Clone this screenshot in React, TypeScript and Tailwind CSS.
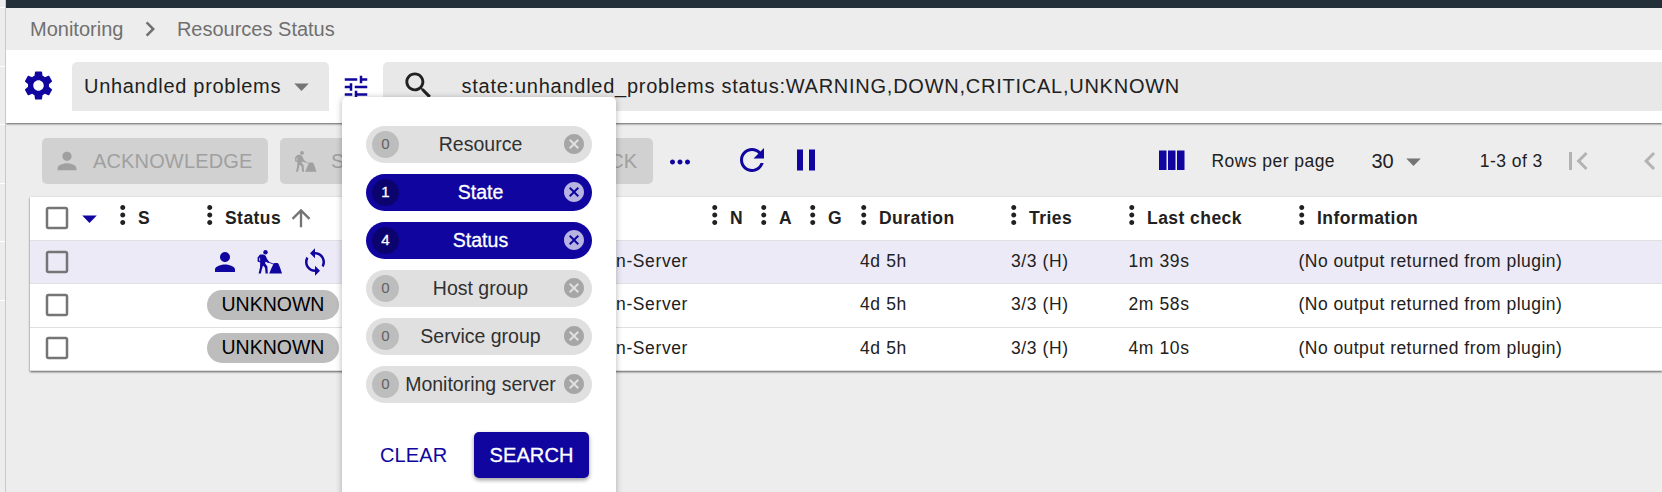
import React from "react";

const paths = {
  chevronRight: "M10 6 8.59 7.41 13.17 12l-4.58 4.59L10 18l6-6z",
  settings:
    "M19.14 12.94c.04-.3.06-.61.06-.94 0-.32-.02-.64-.07-.94l2.03-1.58c.18-.14.23-.41.12-.61l-1.92-3.32c-.12-.22-.37-.29-.59-.22l-2.39.96c-.5-.38-1.03-.7-1.62-.94l-.36-2.54c-.04-.24-.24-.41-.48-.41h-3.84c-.24 0-.43.17-.47.41l-.36 2.54c-.59.24-1.13.57-1.62.94l-2.39-.96c-.22-.08-.47 0-.59.22L2.74 8.87c-.12.21-.08.47.12.61l2.03 1.58c-.05.3-.09.63-.09.94s.02.64.07.94l-2.03 1.58c-.18.14-.23.41-.12.61l1.92 3.32c.12.22.37.29.59.22l2.39-.96c.5.38 1.03.7 1.62.94l.36 2.54c.05.24.24.41.48.41h3.84c.24 0 .44-.17.47-.41l.36-2.54c.59-.24 1.13-.56 1.62-.94l2.39.96c.22.08.47 0 .59-.22l1.92-3.32c.12-.22.07-.47-.12-.61l-2.01-1.58zM12 15.6c-1.98 0-3.6-1.62-3.6-3.6s1.62-3.6 3.6-3.6 3.6 1.62 3.6 3.6-1.62 3.6-3.6 3.6z",
  caret: "M7 10l5 5 5-5z",
  tune: "M3 17v2h6v-2H3zM3 5v2h10V5H3zm10 16v-2h8v-2h-8v-2h-2v6h2zM7 9v2H3v2h4v2h2V9H7zm14 4v-2H11v2h10zm-6-4h2V7h4V5h-4V3h-2v6z",
  search:
    "M15.5 14h-.79l-.28-.27C15.41 12.59 16 11.11 16 9.5 16 5.91 13.09 3 9.5 3S3 5.91 3 9.5 5.91 16 9.5 16c1.61 0 3.09-.59 4.23-1.57l.27.28v.79l5 4.99L20.49 19l-4.99-5zm-6 0C7.01 14 5 11.99 5 9.5S7.01 5 9.5 5 14 7.01 14 9.5 11.99 14 9.5 14z",
  person: "M12 12c2.21 0 4-1.79 4-4s-1.79-4-4-4-4 1.79-4 4 1.79 4 4 4zm0 2c-2.67 0-8 1.34-8 4v2h16v-2c0-2.66-5.33-4-8-4z",
  moreHoriz:
    "M6 10c-1.1 0-2 .9-2 2s.9 2 2 2 2-.9 2-2-.9-2-2-2zm12 0c-1.1 0-2 .9-2 2s.9 2 2 2 2-.9 2-2-.9-2-2-2zm-6 0c-1.1 0-2 .9-2 2s.9 2 2 2 2-.9 2-2-.9-2-2-2z",
  moreVert:
    "M12 8c1.1 0 2-.9 2-2s-.9-2-2-2-2 .9-2 2 .9 2 2 2zm0 2c-1.1 0-2 .9-2 2s.9 2 2 2 2-.9 2-2-.9-2-2-2zm0 6c-1.1 0-2 .9-2 2s.9 2 2 2 2-.9 2-2-.9-2-2-2z",
  refresh:
    "M17.65 6.35C16.2 4.9 14.21 4 12 4c-4.42 0-7.99 3.58-7.99 8s3.57 8 7.99 8c3.73 0 6.84-2.55 7.73-6h-2.08c-.82 2.33-3.04 4-5.65 4-3.31 0-6-2.69-6-6s2.69-6 6-6c1.66 0 3.14.69 4.22 1.78L13 11h7V4l-2.35 2.35z",
  pause: "M6 19h4V5H6v14zm8-14v14h4V5h-4z",
  columns: "M10 18h5V5h-5v13zm-6 0h5V5H4v13zM16 5v13h5V5h-5z",
  firstPage: "M18.41 16.59L13.82 12l4.59-4.59L17 6l-6 6 6 6zM6 6h2v12H6z",
  chevronLeft: "M15.41 7.41L14 6l-6 6 6 6 1.41-1.41L10.83 12z",
  checkbox: "M19 5v14H5V5h14m0-2H5c-1.1 0-2 .9-2 2v14c0 1.1.9 2 2 2h14c1.1 0 2-.9 2-2V5c0-1.1-.9-2-2-2z",
  arrowUp: "M4 12l1.41 1.41L11 7.83V20h2V7.83l5.58 5.59L20 12l-8-8-8 8z",
  sync: "M12 4V1L8 5l4 4V6c3.31 0 6 2.69 6 6 0 1.01-.25 1.97-.7 2.8l1.46 1.46C19.54 15.03 20 13.57 20 12c0-4.42-3.58-8-8-8zm0 14c-3.31 0-6-2.69-6-6 0-1.01.25-1.97.7-2.8L5.24 7.74C4.46 8.97 4 10.43 4 12c0 4.42 3.58 8 8 8v3l4-4-4-4v3z",
  cancel:
    "M12 2C6.47 2 2 6.47 2 12s4.47 10 10 10 10-4.47 10-10S17.53 2 12 2zm5 13.59L15.59 17 12 13.41 8.41 17 7 15.59 10.59 12 7 8.41 8.41 7 12 10.59 15.59 7 17 8.41 13.41 12 17 15.59z",
};

function Icon({ name, className }: { name: keyof typeof paths; className: string }) {
  return (
    <svg viewBox="0 0 24 24" fill="currentColor" className={`shrink-0 ${className}`}>
      <path d={paths[name]} />
    </svg>
  );
}

function Digging({ className }: { className: string }) {
  return (
    <svg viewBox="0 0 25 24" fill="currentColor" className={`shrink-0 ${className}`}>
      <circle cx="8.5" cy="2.2" r="2.2" />
      <path
        d="M3 4.6 L6.6 4.4 L8.6 5.8 L10.2 9.2 L12.3 12 L11.6 13 L8.3 11.6 L8.2 13.6 L10.4 16.4 L10.8 23.6 H8.6 L8 17.8 L6 15.4 L5 18.8 L3.8 23.6 H1.6 L3 17.4 L3.2 12.6 L0.6 11.6 L0.6 7.4 Z M3 7.2 L2.2 8.6 L2.2 10.6 L3.2 11 Z"
        fillRule="evenodd"
      />
      <path d="M7 10.4 L17 14.3" stroke="currentColor" strokeWidth="0.9" />
      <path d="M12.2 23.6 L14.6 17.8 L16.4 14.2 Q17 12.9 18 13.1 L20.4 13 Q21.4 13.4 21.8 14.6 L23.2 18 L25 23.6 Z" />
    </svg>
  );
}

const columns = "grid grid-cols-[89px_87px_505px_49px_49px_51px_150px_118px_170px_1fr]";

function Head({ label }: { label: string }) {
  return (
    <div className="flex items-center">
      <svg viewBox="9 0 6 24" fill="currentColor" className="mb-1.5 mr-[11.5px] h-[30px] w-[7.5px] shrink-0">
        <path d={paths.moreVert} />
      </svg>
      <span className="whitespace-nowrap text-[17.5px] font-bold tracking-[0.45px]">{label}</span>
      {label === "Status" && <Icon name="arrowUp" className="ml-1.5 size-7 text-[#757575]" />}
    </div>
  );
}

function Row({ active, last }: { active?: boolean; last: string }) {
  return (
    <div
      className={`${columns} items-center border-b border-[#e0e0e0] pb-px text-[17.5px] tracking-[0.46px] ${
        active ? "h-[43px] bg-[#eceaf6]" : "h-[43.5px] bg-white"
      }`}
    >
      <div className="flex pl-3">
        <Icon name="checkbox" className="size-[30px] text-[#757575]" />
      </div>
      <div />
      <div className="flex items-center justify-between">
        {active ? (
          <div className="flex items-center pl-1 text-[#10069f]">
            <Icon name="person" className="size-[30px]" />
            <Digging className="ml-[17px] h-6 w-[25px]" />
            <Icon name="sync" className="ml-[18px] size-[30px]" />
          </div>
        ) : (
          <span className="ml-px flex h-[30px] w-[132px] items-center justify-center rounded-full bg-[#bdbdbd] pb-px text-[19.5px] tracking-normal text-black">
            UNKNOWN
          </span>
        )}
        <span className="pb-px pr-[23px] tracking-[0.6px]">on-Server</span>
      </div>
      <div />
      <div />
      <div />
      <span className="pb-px tracking-[0.6px]">4d 5h</span>
      <span className="pb-px pl-px tracking-[0.6px]">3/3 (H)</span>
      <span className="pb-px pl-[0.5px] tracking-[0.6px]">{last}</span>
      <span className="whitespace-nowrap pb-px pl-[0.5px]">(No output returned from plugin)</span>
    </div>
  );
}

function Pill({ count, label }: { count: number; label: string }) {
  const on = count > 0;
  return (
    <div
      className={`flex h-[36.5px] items-center rounded-full pl-1.5 pr-1.5 ${
        on ? "bg-[#10069f] text-white" : "bg-[#e0e0e0] text-[#303030]"
      }`}
    >
      <span
        className={`flex size-[27px] shrink-0 items-center justify-center rounded-full text-[15px] ${
          on ? "bg-[#0b046f] text-white [-webkit-text-stroke:0.3px_white]" : "bg-[#bdbdbd] text-[#616161]"
        }`}
      >
        {count}
      </span>
      <span className={`flex-1 whitespace-nowrap text-center text-[19.5px] ${on ? "[-webkit-text-stroke:0.3px_white]" : ""}`}>
        {label}
      </span>
      <Icon name="cancel" className={`size-6 ${on ? "text-[#b7b4e2]" : "text-[#a6a6a6]"}`} />
    </div>
  );
}

const actionButton = "flex h-[46px] items-center rounded-[5px] bg-[#d1d1d1] text-xl text-[#a0a0a0]";

export default function App() {
  return (
    <div className="relative flex h-[492px] w-[1662px] overflow-hidden bg-[#ededed] font-['Liberation_Sans',Arial,sans-serif] text-[#212121]">
      <div className="flex w-1.5 shrink-0 flex-col border-r border-[#c9c9c9] pt-[7px]">
        {[0, 1, 2, 3, 4, 5].map((i) => (
          <div key={i} className="h-[58.6px] shrink-0 border-t border-white" />
        ))}
      </div>

      <div className="flex min-w-0 flex-1 flex-col">
        <div className="h-2 shrink-0 bg-[#232f39]" />
        <nav className="flex h-[42px] shrink-0 items-center pl-6 text-xl text-[#707070]">
          <span>Monitoring</span>
          <Icon name="chevronRight" className="mx-3 size-[30px]" />
          <span className="-ml-[0.5px]">Resources Status</span>
        </nav>

        <header className="relative flex h-[73px] shrink-0 items-start bg-white pt-3 shadow-[0_1px_2px_rgba(0,0,0,0.6)] [clip-path:inset(0_0_-6px_0)]">
          <Icon name="settings" className="ml-[15px] mt-1.5 size-[35px] text-[#10069f]" />
          <div className="ml-4 flex h-[49px] w-[257px] items-center justify-between rounded-t-[5px] bg-[#e8e8e8] pl-3 pr-[10px] text-xl tracking-[0.7px]">
            <span className="whitespace-nowrap pb-0.5">Unhandled problems</span>
            <Icon name="caret" className="size-[35px] text-[#757575]" />
          </div>
          <Icon name="tune" className="ml-3 mt-2.5 size-[30px] text-[#10069f]" />
          <div className="ml-3 flex h-[49px] flex-1 items-center rounded-tl-[5px] bg-[#e8e8e8] pl-[17.5px] text-xl tracking-[0.75px]">
            <Icon name="search" className="mb-[3px] size-[35px]" />
            <span className="ml-[26px] whitespace-nowrap pb-0.5">
              state:unhandled_problems status:WARNING,DOWN,CRITICAL,UNKNOWN
            </span>
          </div>
        </header>

        <div className="flex h-[74px] shrink-0 items-center justify-between pl-9 pt-0.5">
          <div className="flex items-center">
            <div className={`${actionButton} w-[226px] pl-[11px]`}>
              <Icon name="person" className="size-[28px]" />
              <span className="ml-3 tracking-[0.15px]">ACKNOWLEDGE</span>
            </div>
            <div className={`${actionButton} ml-3 w-[225px] pl-3.5`}>
              <Digging className="h-[21px] w-[23px]" />
              <span className="ml-3.5 whitespace-nowrap">SET DOWNTIME</span>
            </div>
            <div className={`${actionButton} ml-3 w-[136px] justify-end pr-4`}>CHECK</div>
            <div className="flex items-center text-[#10069f]">
              <Icon name="moreHoriz" className="ml-3 mt-0.5 size-[30px]" />
              <Icon name="refresh" className="mb-[3px] ml-[39px] size-9" />
              <Icon name="pause" className="mb-[3px] ml-[18px] size-9" />
            </div>
          </div>
          <div className="flex w-[509px] shrink-0 items-center text-[17.5px] tracking-[0.45px]">
            <Icon name="columns" className="size-9 text-[#10069f]" />
            <span className="ml-[22.5px] w-[160px] shrink-0 whitespace-nowrap">Rows per page</span>
            <span className="shrink-0 text-xl tracking-normal">30</span>
            <Icon name="caret" className="ml-0.5 size-[35px] text-[#757575]" />
            <span className="ml-[49px] w-[80px] shrink-0 whitespace-nowrap">1-3 of 3</span>
            <Icon name="firstPage" className="size-9 text-[#b3b3b3]" />
            <Icon name="chevronLeft" className="ml-9 size-9 text-[#b3b3b3]" />
          </div>
        </div>

        <section className="ml-6 shrink-0 bg-white shadow-[0_1px_2px_rgba(0,0,0,0.6)]">
          <div className={`${columns} h-11 items-center border-b border-[#e0e0e0] pb-px`}>
            <div className="flex items-center pl-3">
              <Icon name="checkbox" className="size-[30px] text-[#757575]" />
              <Icon name="caret" className="size-[35px] text-[#10069f]" />
            </div>
            <Head label="S" />
            <Head label="Status" />
            <Head label="N" />
            <Head label="A" />
            <Head label="G" />
            <Head label="Duration" />
            <Head label="Tries" />
            <Head label="Last check" />
            <Head label="Information" />
          </div>
          <Row active last="1m 39s" />
          <Row last="2m 58s" />
          <Row last="4m 10s" />
        </section>
      </div>

      <div className="absolute left-[342px] top-[97px] flex h-[420px] w-[274px] flex-col rounded-[5px] bg-white px-6 pt-[29px] shadow-[0_1px_6px_rgba(0,0,0,0.3)]">
        <div className="flex flex-col gap-[11.5px]">
          <Pill count={0} label="Resource" />
          <Pill count={1} label="State" />
          <Pill count={4} label="Status" />
          <Pill count={0} label="Host group" />
          <Pill count={0} label="Service group" />
          <Pill count={0} label="Monitoring server" />
        </div>
        <div className="mt-[29.5px] flex items-center justify-between pl-3.5 pr-[3px] text-xl">
          <span className="tracking-[0.1px] text-[#10069f]">CLEAR</span>
          <button className="h-[46px] w-[115px] rounded-[5px] bg-[#10069f] tracking-[0.1px] text-white shadow-[0_2px_4px_rgba(0,0,0,0.4)] [-webkit-text-stroke:0.3px_white]">
            SEARCH
          </button>
        </div>
      </div>
    </div>
  );
}
